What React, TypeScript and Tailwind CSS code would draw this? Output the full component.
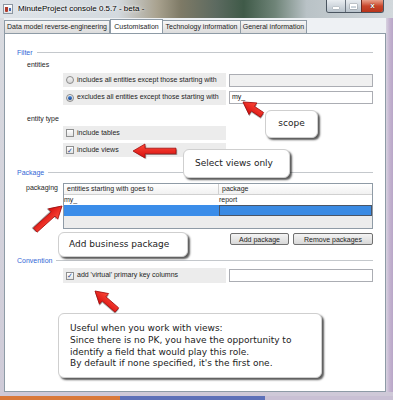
import React from "react";

const ui = "font-['Liberation_Sans',Arial,sans-serif]";
const callFont = "font-['DejaVu_Sans',Verdana,sans-serif]";

function SectionHeader({ label }: { label: string }) {
  return (
    <div className="flex h-[10px] items-center gap-[4px]">
      <span className="text-[7px] leading-none text-[#3367d6]">{label}</span>
      <div className="h-px flex-1 bg-[#c4c8cc]" />
    </div>
  );
}

function Radio({ on }: { on?: boolean }) {
  return (
    <span className="flex h-[8px] w-[8px] items-center justify-center rounded-full border border-[#8a8a8a] bg-gradient-to-b from-[#f4f4f4] to-[#d6d6d6]">
      {on && <span className="h-[4px] w-[4px] rounded-full bg-gradient-to-b from-[#4c8ee0] to-[#143f8c]" />}
    </span>
  );
}

function Check({ on }: { on?: boolean }) {
  return (
    <span className="flex h-[8px] w-[8px] items-center justify-center border border-[#8e8f8f] bg-gradient-to-b from-white to-[#e4e4e4] text-[7px] leading-none text-[#2a4a8a]">
      {on ? "✓" : ""}
    </span>
  );
}

function OptionRow({
  mark,
  label,
  h,
  input,
}: {
  mark: React.ReactNode;
  label: string;
  h: string;
  input?: React.ReactNode;
}) {
  return (
    <div className={`ml-[46px] flex ${h}`}>
      <div className="flex w-[163px] items-center gap-[3px] bg-[#ececec] pl-[3px] text-[7px] text-[#1e1e1e]">
        {mark}
        <span>{label}</span>
      </div>
      {input && <div className="ml-[3px] flex flex-1 items-center">{input}</div>}
    </div>
  );
}

function Field({ value, disabled }: { value?: string; disabled?: boolean }) {
  return (
    <div
      className={`flex h-[13px] w-full items-center border border-[#abadb3] px-[2px] text-[7px] text-[#111] ${
        disabled ? "bg-[#f0f0f0]" : "bg-white"
      }`}
    >
      {value}
    </div>
  );
}

function Callout({
  className,
  children,
}: {
  className: string;
  children: React.ReactNode;
}) {
  return (
    <div
      className={`absolute rounded-[6px] border border-[#cfcfcf] bg-white text-[#222] shadow-[2px_2px_2px_rgba(0,0,0,0.65)] ${callFont} ${className}`}
    >
      {children}
    </div>
  );
}

function Arrow({ x, y, angle, len }: { x: number; y: number; angle: number; len: number }) {
  const pts = `0,0 12,-7 12,-2.8 ${len},-2.8 ${len},2.8 12,2.8 12,7`;
  return (
    <g transform={`translate(${x} ${y}) rotate(${angle})`}>
      <polygon points={pts} transform="translate(1.2 1.2)" fill="rgba(0,0,0,0.35)" />
      <polygon points={pts} fill="url(#red)" stroke="#a30c0c" strokeWidth="0.8" strokeLinejoin="round" />
    </g>
  );
}

export default function App() {
  return (
    <div className={`relative flex h-[400px] w-[393px] flex-col overflow-hidden bg-[#d6d4de] ${ui}`}>
      {/* title bar */}
      <div className="flex h-[18px] items-center bg-[linear-gradient(90deg,#dfe4e9_0%,#d3d9de_30%,#a9a28f_40%,#7e7a66_46%,#5c6a60_55%,#3f5a48_62%,#6f8478_70%,#b9c2c6_78%,#d2d8dc_100%)]">
        <div className="ml-[3px] flex h-[10px] w-[10px] items-center justify-center border border-[#8c96a0] bg-gradient-to-b from-white to-[#dfe3e8]">
          <span className="h-[5px] w-[3px] rounded-b-[1px] bg-[#b23b2b]" />
          <span className="ml-px h-[3px] w-[2px] bg-[#3d6bb5]" />
        </div>
        <span className="ml-[5px] text-[8px] leading-none text-black [text-shadow:0_0_4px_#fff,0_0_2px_#fff]">
          MinuteProject console 0.5.7 - beta -
        </span>
        <div className="ml-auto mr-[9px] flex h-[13px] self-start overflow-hidden rounded-b-[3px] border border-t-0 border-[#4a5560]">
          <div className="flex w-[18px] items-end justify-center bg-gradient-to-b from-[#e9edf1] to-[#b8c2cb] pb-[3px]">
            <span className="h-[2px] w-[6px] bg-white shadow-[0_0_1px_#333]" />
          </div>
          <div className="flex w-[16px] items-center justify-center border-l border-[#6b7580] bg-gradient-to-b from-[#e9edf1] to-[#b8c2cb]">
            <span className="h-[5px] w-[7px] border border-t-2 border-white shadow-[0_0_1px_#333]" />
          </div>
          <div className="flex w-[22px] items-center justify-center border-l border-[#6b2a20] bg-gradient-to-b from-[#e8a08a] via-[#c9452a] to-[#b8341a] text-[8px] font-bold leading-none text-white [text-shadow:0_0_1px_#000]">
            x
          </div>
        </div>
      </div>

      {/* window body */}
      <div className="flex flex-1">
        <div className="w-[4px] bg-gradient-to-b from-[#d9dbe0] to-[#cfcbd8]" />
        <div className="flex w-[382px] flex-col">
          {/* tabs */}
          <div className="flex h-[15px] items-end bg-[#eef1f4] text-[7px] text-[#1e1e1e]">
            <div className="flex h-[13px] w-[106px] items-center justify-center border border-b-0 border-[#8e9ba6] bg-gradient-to-b from-[#f6f6f6] to-[#dcdcdc]">
              Data model reverse-engineering
            </div>
            <div className="-mb-px flex h-[15px] w-[53px] items-center justify-center border border-b-0 border-[#8e9ba6] bg-white">
              Customisation
            </div>
            <div className="flex h-[13px] w-[78px] items-center justify-center border border-b-0 border-l-0 border-[#8e9ba6] bg-gradient-to-b from-[#f6f6f6] to-[#dcdcdc]">
              Technology information
            </div>
            <div className="flex h-[13px] w-[66px] items-center justify-center border border-b-0 border-l-0 border-[#8e9ba6] bg-gradient-to-b from-[#f6f6f6] to-[#dcdcdc]">
              General information
            </div>
          </div>

          {/* panel */}
          <div className="flex flex-1 flex-col border border-[#8e9ba6] bg-white px-[12px] text-[7px] text-[#1e1e1e]">
            <div className="mt-[13px]">
              <SectionHeader label="Filter" />
            </div>
            <div className="ml-[10px] mt-[3px] flex h-[10px] items-center">entities</div>
            <div className="mt-[3px]">
              <OptionRow
                h="h-[14px]"
                mark={<Radio />}
                label="includes all entities except those starting with"
                input={<Field disabled />}
              />
            </div>
            <div className="mt-[3px]">
              <OptionRow
                h="h-[15px]"
                mark={<Radio on />}
                label="excludes all entities except those starting with"
                input={<Field value="my_" />}
              />
            </div>
            <div className="ml-[10px] mt-[9px] flex h-[10px] items-center">entity type</div>
            <div className="mt-[2px]">
              <OptionRow h="h-[14px]" mark={<Check />} label="include tables" />
            </div>
            <div className="mt-[3px]">
              <OptionRow h="h-[14px]" mark={<Check on />} label="include views" />
            </div>

            <div className="mt-[10px]">
              <SectionHeader label="Package" />
            </div>
            <div className="mt-[6px] flex">
              <div className="flex h-[11px] w-[46px] items-center pl-[9px]">packaging</div>
              <div className="flex h-[46px] flex-1 flex-col border border-[#8f9ba6] bg-[#ececec]">
                <div className="flex h-[11px] border-b border-[#d0d0d0] bg-gradient-to-b from-white to-[#f1f1f1]">
                  <div className="flex w-[155px] items-center border-r border-[#d0d0d0] pl-[3px]">
                    entities starting with goes to
                  </div>
                  <div className="flex items-center pl-[3px]">package</div>
                </div>
                <div className="flex h-[10px] bg-white">
                  <div className="flex w-[155px] items-center">my_</div>
                  <div className="flex items-center">report</div>
                </div>
                <div className="flex h-[11px] bg-[#3b8de9]">
                  <div className="w-[155px]" />
                  <div className="flex-1 border border-[#4a5566] bg-[#3a8ae3]" />
                </div>
              </div>
            </div>
            <div className="mt-[4px] flex h-[12px] justify-end gap-[4px]">
              <button className="w-[59px] rounded-[2px] border border-[#707070] bg-gradient-to-b from-[#f4f4f4] to-[#d8d8d8] text-[7px] leading-none">
                Add package
              </button>
              <button className="w-[80px] rounded-[2px] border border-[#707070] bg-gradient-to-b from-[#f4f4f4] to-[#d8d8d8] text-[7px] leading-none">
                Remove packages
              </button>
            </div>

            <div className="mt-[10px]">
              <SectionHeader label="Convention" />
            </div>
            <div className="mt-[3px]">
              <OptionRow
                h="h-[15px]"
                mark={<Check on />}
                label="add 'virtual' primary key columns"
                input={<Field />}
              />
            </div>
          </div>
        </div>
        <div className="w-[7px] bg-[linear-gradient(90deg,#d8d2e0,#c4b4d0_50%,#b9a6c8)]" />
      </div>
      <div className="h-[4px] bg-[#cfc9d8]" />
      <div className="flex h-[4px]">
        <div className="w-[120px] bg-[#d9783a]" />
        <div className="w-[145px] bg-[#5d70b8]" />
        <div className="flex-1 bg-[#c9c0d4]" />
      </div>

      {/* annotations */}
      <svg className="pointer-events-none absolute left-0 top-0" width="393" height="400">
        <defs>
          <linearGradient id="red" x1="0" y1="0" x2="0" y2="1">
            <stop offset="0" stopColor="#ff4a3a" />
            <stop offset="1" stopColor="#d40d0d" />
          </linearGradient>
        </defs>
        <Arrow x={243} y={102} angle={34} len={23} />
        <Arrow x={133} y={151} angle={0} len={43} />
        <Arrow x={62} y={206} angle={138} len={36} />
        <Arrow x={95} y={291} angle={41} len={29} />
      </svg>

      <Callout className="left-[265px] top-[110px] flex h-[28px] w-[53px] items-center justify-center text-[9px]">
        scope
      </Callout>
      <Callout className="left-[183px] top-[149px] flex h-[29px] w-[107px] items-center pl-[11px] text-[9px]">
        Select views only
      </Callout>
      <Callout className="left-[58px] top-[232px] flex h-[25px] w-[130px] items-center pl-[10px] text-[9px]">
        Add business package
      </Callout>
      <Callout className="left-[58px] top-[313px] h-[65px] w-[264px] pl-[11px] pt-[9px] text-[9px] leading-[11.8px]">
        <div>Useful when you work with views:</div>
        <div>Since there is no PK, you have the opportunity to</div>
        <div>identify a field that would play this role.</div>
        <div>By default if none specified, it's the first one.</div>
      </Callout>
    </div>
  );
}
